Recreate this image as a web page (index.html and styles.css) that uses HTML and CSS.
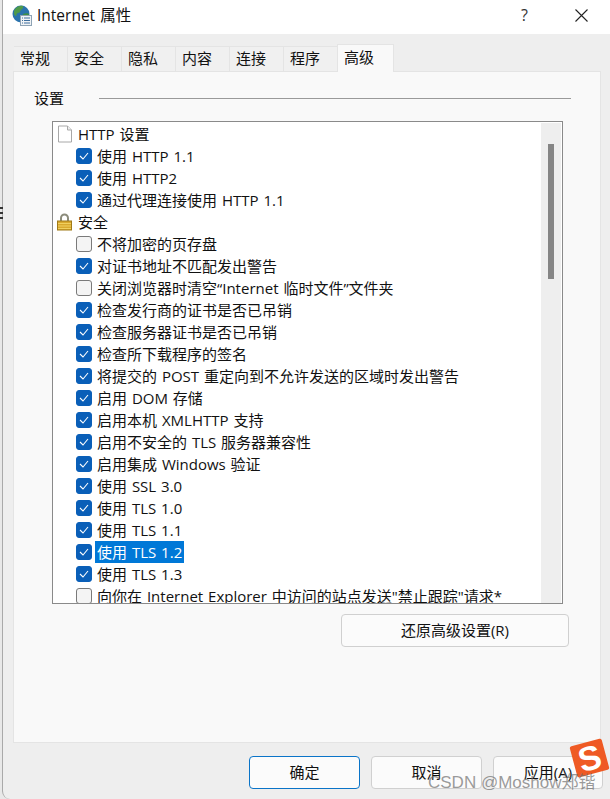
FILE: index.html
```html
<!DOCTYPE html>
<html lang="zh-CN">
  <head>
    <meta charset="UTF-8" />
    <title>Internet 属性</title>
    <link rel="stylesheet" href="styles.css">
  </head>
  <body>
    <div class="edge-mark"><i></i><i></i><i></i></div>

    <div class="dialog">
      <div class="title-bar">
        <svg class="globe" width="22" height="22" viewBox="0 0 22 22">
          <circle cx="9" cy="9" r="8.500" fill="#2a73ad" />
          <path d="M3 4c2-3 6-4 8-3 1 2-1 3-2 4s-1 3-3 3-1 3-2 3-2-1-2-3 0-3 1-4z" fill="#4f9a4a" />
          <path d="M11 9c2-1 5-1 6 0 0 3-2 6-4 7-1-2-3-4-2-7z" fill="#3f8f46" />
          <rect x="8.500" y="10.500" width="11" height="10" fill="#f1f3f5" stroke="#8ea3b5" />
          <path d="M10 13h1M12 13h6M10 15.500h1M12 15.500h6M10 18h1M12 18h6" stroke="#3f6f9f" />
        </svg>
        <span class="title-text">Internet 属性</span>
        <span class="title-help">?</span>
        <svg class="title-close" width="13" height="13" viewBox="0 0 13 13">
          <path d="M0.500 0.500l12 12M12.500 0.500l-12 12" stroke="#222" stroke-width="1.1" fill="none" />
        </svg>
      </div>

      <div class="dialog-body">
        <div class="tabs">
          <div class="tab">常规</div>
          <div class="tab">安全</div>
          <div class="tab">隐私</div>
          <div class="tab">内容</div>
          <div class="tab">连接</div>
          <div class="tab">程序</div>
          <div class="tab active">高级</div>
        </div>

        <div class="panel">
          <div class="group-title">
            <span>设置</span>
            <div class="group-line"></div>
          </div>

          <div class="list-box">
            <div class="list-rows">
              <div class="row header">
                <svg class="row-icon" width="16" height="18" viewBox="0 0 16 18">
                  <path d="M1.500 1h9l4 4v12h-13z" fill="#fff" stroke="#a8a8a8" />
                  <path d="M10.500 1v4h4" fill="#eee" stroke="#a8a8a8" />
                </svg>
                <span>HTTP 设置</span>
              </div>
              <div class="row"><span class="check on"><svg width="10" height="8" viewBox="0 0 10 8"><path d="M1 4l3 3 5-6" /></svg></span><span>使用 HTTP 1.1</span></div>
              <div class="row"><span class="check on"><svg width="10" height="8" viewBox="0 0 10 8"><path d="M1 4l3 3 5-6" /></svg></span><span>使用 HTTP2</span></div>
              <div class="row"><span class="check on"><svg width="10" height="8" viewBox="0 0 10 8"><path d="M1 4l3 3 5-6" /></svg></span><span>通过代理连接使用 HTTP 1.1</span></div>
              <div class="row header">
                <svg class="row-icon" width="16" height="18" viewBox="0 0 16 18">
                  <path d="M4 9V5a3.500 3.500 0 0 1 7 0v4" fill="none" stroke="#8c8c7c" stroke-width="2" />
                  <rect x="0.500" y="8" width="14" height="9" fill="#d9a92e" stroke="#a07a18" />
                  <path d="M1 10.500h13M1 13h13M1 15.500h13" stroke="#f0d060" />
                </svg>
                <span>安全</span>
              </div>
              <div class="row"><span class="check"></span><span>不将加密的页存盘</span></div>
              <div class="row"><span class="check on"><svg width="10" height="8" viewBox="0 0 10 8"><path d="M1 4l3 3 5-6" /></svg></span><span>对证书地址不匹配发出警告</span></div>
              <div class="row"><span class="check"></span><span>关闭浏览器时清空“Internet 临时文件”文件夹</span></div>
              <div class="row"><span class="check on"><svg width="10" height="8" viewBox="0 0 10 8"><path d="M1 4l3 3 5-6" /></svg></span><span>检查发行商的证书是否已吊销</span></div>
              <div class="row"><span class="check on"><svg width="10" height="8" viewBox="0 0 10 8"><path d="M1 4l3 3 5-6" /></svg></span><span>检查服务器证书是否已吊销</span></div>
              <div class="row"><span class="check on"><svg width="10" height="8" viewBox="0 0 10 8"><path d="M1 4l3 3 5-6" /></svg></span><span>检查所下载程序的签名</span></div>
              <div class="row"><span class="check on"><svg width="10" height="8" viewBox="0 0 10 8"><path d="M1 4l3 3 5-6" /></svg></span><span>将提交的 POST 重定向到不允许发送的区域时发出警告</span></div>
              <div class="row"><span class="check on"><svg width="10" height="8" viewBox="0 0 10 8"><path d="M1 4l3 3 5-6" /></svg></span><span>启用 DOM 存储</span></div>
              <div class="row"><span class="check on"><svg width="10" height="8" viewBox="0 0 10 8"><path d="M1 4l3 3 5-6" /></svg></span><span>启用本机 XMLHTTP 支持</span></div>
              <div class="row"><span class="check on"><svg width="10" height="8" viewBox="0 0 10 8"><path d="M1 4l3 3 5-6" /></svg></span><span>启用不安全的 TLS 服务器兼容性</span></div>
              <div class="row"><span class="check on"><svg width="10" height="8" viewBox="0 0 10 8"><path d="M1 4l3 3 5-6" /></svg></span><span>启用集成 Windows 验证</span></div>
              <div class="row"><span class="check on"><svg width="10" height="8" viewBox="0 0 10 8"><path d="M1 4l3 3 5-6" /></svg></span><span>使用 SSL 3.0</span></div>
              <div class="row"><span class="check on"><svg width="10" height="8" viewBox="0 0 10 8"><path d="M1 4l3 3 5-6" /></svg></span><span>使用 TLS 1.0</span></div>
              <div class="row"><span class="check on"><svg width="10" height="8" viewBox="0 0 10 8"><path d="M1 4l3 3 5-6" /></svg></span><span>使用 TLS 1.1</span></div>
              <div class="row"><span class="check on"><svg width="10" height="8" viewBox="0 0 10 8"><path d="M1 4l3 3 5-6" /></svg></span><span class="selected">使用 TLS 1.2</span></div>
              <div class="row"><span class="check on"><svg width="10" height="8" viewBox="0 0 10 8"><path d="M1 4l3 3 5-6" /></svg></span><span>使用 TLS 1.3</span></div>
              <div class="row"><span class="check"></span><span>向你在 Internet Explorer 中访问的站点发送"禁止跟踪"请求*</span></div>
            </div>
            <div class="scrollbar"><div class="scroll-thumb"></div></div>
          </div>

          <div class="reset-row">
            <button class="btn reset-btn">还原高级设置(R)</button>
          </div>
        </div>

        <div class="footer">
          <button class="btn footer-btn primary">确定</button>
          <button class="btn footer-btn">取消</button>
          <button class="btn footer-btn">应用(A)</button>
        </div>
      </div>
    </div>

    <!-- overlays from the screenshot: input method badge and watermark -->
    <div class="ime-badge"><span>S</span></div>
    <div class="watermark">CSDN @Moshow郑锴</div>
  </body>
</html>
```

FILE: styles.css
```css
/* Reset */
* {
  margin: 0;
  padding: 0;
  box-sizing: border-box;
}

body {
  width: 610px;
  height: 799px;
  overflow: hidden;
  position: relative;
  background-color: #e8e8e8;
  padding-left: 2px;
  color: #111;
  font-family: "Open Sans", "Noto Sans CJK SC", sans-serif;
  font-size: 15px;
  word-spacing: 1px;
}

.dialog {
  width: 608px;
  height: 799px;
  display: flex;
  flex-direction: column;
  background-color: #eeeeee;
  border-left: 1px solid #a9a9a9;
  border-bottom-left-radius: 8px;
}

.title-bar {
  height: 34px;
  flex-shrink: 0;
  display: flex;
  align-items: center;
  background-color: #ffffff;
  padding: 0 22px 0 9px;
}

.globe {
  margin-top: -3px;
}

.title-text {
  margin-left: 3px;
  margin-top: -6px;
  font-size: 15.500px;
}

.title-help {
  margin-left: auto;
  margin-top: -4px;
  font-size: 16px;
  color: #333;
}

.title-close {
  margin-left: 47px;
  margin-top: -3px;
}

.dialog-body {
  flex: 1;
  display: flex;
  flex-direction: column;
  padding: 10px 0 10px 10px;
}

.tabs {
  display: flex;
  height: 27px;
  align-items: flex-end;
  padding-left: 1px;
}

.tab {
  width: 54px;
  height: 25px;
  line-height: 22px;
  padding-left: 6px;
  border: 1px solid #e4e4e4;
  border-left: none;
  border-bottom: none;
  background-color: #f0f0f0;
}

.tab.active {
  width: 57px;
  height: 28px;
  margin-bottom: -1px;
  margin-left: -1px;
  padding-left: 6px;
  line-height: 24px;
  position: relative;
  background-color: #f9f9f9;
  border-left: 1px solid #e4e4e4;
}

.panel {
  width: 588px;
  height: 672px;
  background-color: #f9f9f9;
  border: 1px solid #e4e4e4;
  padding: 14px 29px 0 20px;
}

.group-title {
  display: flex;
  align-items: center;
  height: 24px;
  gap: 35px;
}

.group-title span {
  margin-top: -2px;
}

.group-line {
  flex: 1;
  height: 1px;
  background-color: #9a9a9a;
}

.list-box {
  margin: 11px 8px 0 18px;
  height: 483px;
  display: flex;
  background-color: #ffffff;
  border: 1px solid #8a8a8a;
  padding: 1px 1px 0 0;
}

.list-rows {
  flex: 1;
  overflow: hidden;
  padding-left: 6px;
}

.row {
  height: 22px;
  display: flex;
  align-items: center;
  white-space: nowrap;
  padding-left: 17px;
}

.row.header {
  padding-left: 0;
}

.row-icon {
  margin-left: -2px;
  margin-right: 5px;
}

.check {
  width: 16px;
  height: 16px;
  margin-right: 3px;
  border: 1px solid #7a7a7a;
  border-radius: 3px;
  background-color: #f4f4f4;
  display: flex;
  align-items: center;
  justify-content: center;
  flex-shrink: 0;
}

.check.on {
  background-color: #0a5fb8;
  border-color: #0a5fb8;
}

.check svg path {
  fill: none;
  stroke: #ffffff;
  stroke-width: 1.1;
}

.row span:last-child {
  padding: 0 2px;
  line-height: 22px;
}

.row.header span:last-child {
  padding: 0;
}

.row .selected {
  background-color: #0078d7;
  color: #ffffff;
}

.scrollbar {
  width: 20px;
  flex-shrink: 0;
  background-color: #eeeeee;
  padding: 21px 7px 0;
}

.scroll-thumb {
  width: 6px;
  height: 135px;
  background-color: #858585;
}

.reset-row {
  display: flex;
  justify-content: flex-end;
  margin-top: 10px;
  margin-right: 2px;
}

.btn {
  font-family: inherit;
  font-size: 15px;
  word-spacing: inherit;
  padding-bottom: 2px;
  color: #111;
  background-color: #fbfbfb;
  border: 1px solid #d0d0d0;
  border-radius: 4px;
}

.reset-btn {
  width: 228px;
  height: 33px;
}

.footer {
  display: flex;
  gap: 11px;
  margin-top: 13px;
  padding-left: 236px;
}

.footer-btn {
  width: 111px;
  height: 33px;
}

.footer-btn:last-child {
  width: 110px;
}

.footer-btn.primary {
  border: 1.5px solid #0a74c8;
}

.edge-mark {
  position: absolute;
  left: 0;
  top: 207px;
  width: 3px;
  display: flex;
  flex-direction: column;
  gap: 3px;
}

.edge-mark i {
  display: block;
  height: 2px;
  background-color: #333;
}

.ime-badge {
  position: absolute;
  left: 573px;
  top: 742px;
  width: 33px;
  height: 32px;
  background-color: #ef5a24;
  border-radius: 2px;
  transform: rotate(-15deg);
  display: flex;
  align-items: center;
  justify-content: center;
  color: #ffffff;
  font-family: "Liberation Sans", sans-serif;
  font-weight: bold;
  font-size: 34px;
  line-height: 1;
}

.watermark {
  position: absolute;
  left: 428px;
  top: 772px;
  font-family: "Liberation Sans", "Noto Sans CJK SC", sans-serif;
  font-size: 17px;
  line-height: 22px;
  word-spacing: 0;
  color: rgba(110, 110, 110, 0.7);
  white-space: nowrap;
}
```
